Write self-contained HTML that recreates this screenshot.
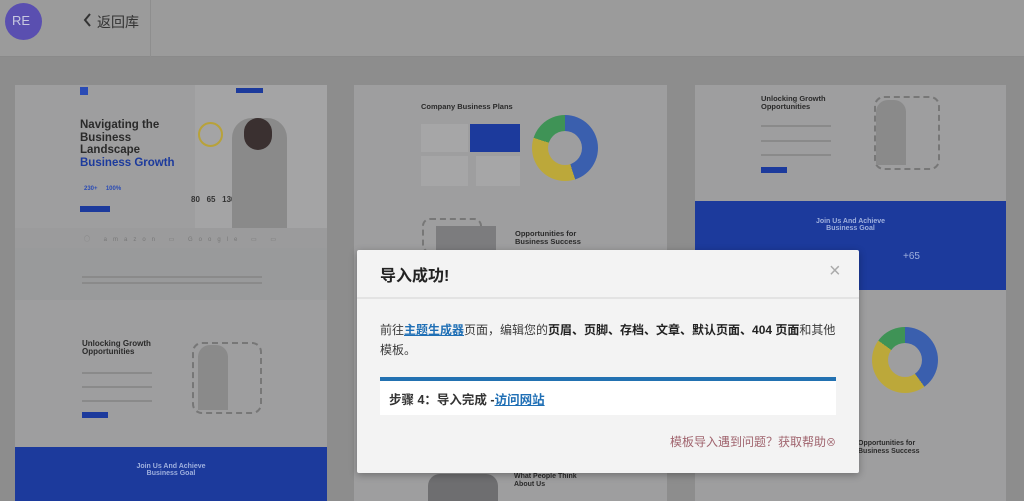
<!DOCTYPE html>
<html><head><meta charset="utf-8">
<style>
*{margin:0;padding:0;box-sizing:border-box}
body{width:1024px;height:501px;overflow:hidden;background:#8d8d8d;font-family:"Liberation Sans","Noto Sans CJK SC",sans-serif;position:relative}
.abs{position:absolute}
.hdr{left:0;top:0;width:1024px;height:57px;background:#9b9b9b;border-bottom:1px solid #8a8a8a}
.card{background:#9e9e9f}
.t{font-family:"Liberation Sans",sans-serif;font-weight:bold;color:#2a2a2a}
.ln{background:#8a8a8a;height:2px}
.blue{background:#1c3a9c}
.ring{border-radius:50%}
</style></head><body>
<div class="abs hdr"></div>
<div class="abs" style="left:150px;top:0;width:1px;height:57px;background:#8e8e8e"></div>
<div class="abs ring" style="left:5px;top:3px;width:37px;height:37px;background:#5a4fb0"></div>
<div class="abs" style="left:12px;top:13px;color:#c8c8e0;font:13px 'Liberation Sans',sans-serif">RE</div>
<svg class="abs" style="left:83px;top:13px" width="10" height="14"><path d="M7 1L2 7L7 13" stroke="#333" stroke-width="2" fill="none"/></svg>
<div class="abs" style="left:97px;top:12px;font-size:14px;color:#333">返回库</div>

<!-- left card -->
<div class="abs card" style="left:15px;top:85px;width:312px;height:416px"></div>
<div class="abs" style="left:195px;top:85px;width:132px;height:143px;background:#a4a4a5"></div>
<div class="abs" style="left:80px;top:87px;width:8px;height:8px;background:#2a4bb5"></div>
<div class="abs blue" style="left:236px;top:88px;width:27px;height:5px"></div>
<div class="abs t" style="left:80px;top:119px;font-size:11.5px;line-height:12.5px">Navigating the<br>Business<br>Landscape<br><span style="color:#1c3a9c">Business Growth</span></div>
<div class="abs" style="left:84px;top:186px;color:#2a4bb5;font:bold 6px sans-serif">230+ &nbsp; &nbsp; 100%</div>
<div class="abs blue" style="left:80px;top:206px;width:30px;height:6px"></div>
<div class="abs ring" style="left:198px;top:122px;width:25px;height:25px;border:2px solid #b8a23a"></div>
<div class="abs" style="left:191px;top:195px;font:bold 8px sans-serif;color:#333">80 &nbsp; 65 &nbsp; 130</div>
<div class="abs" style="left:232px;top:118px;width:55px;height:110px;background:#8a8a8a;border-radius:20px 20px 0 0"></div>
<div class="abs" style="left:244px;top:118px;width:28px;height:32px;background:#3a3030;border-radius:14px"></div>
<div class="abs" style="left:15px;top:228px;width:312px;height:20px;background:#9b9b9c"></div>
<div class="abs" style="left:84px;top:234px;font-size:6px;color:#777;letter-spacing:6px">◯ amazon ▭ Google ▭ ▭</div>
<div class="abs" style="left:15px;top:248px;width:312px;height:52px;background:#999a9b"></div>
<div class="abs ln" style="left:82px;top:276px;width:180px"></div>
<div class="abs ln" style="left:82px;top:282px;width:180px"></div>
<div class="abs t" style="left:82px;top:340px;font-size:8px;line-height:8px">Unlocking Growth<br>Opportunities</div>
<div class="abs ln" style="left:82px;top:372px;width:70px"></div>
<div class="abs ln" style="left:82px;top:386px;width:70px"></div>
<div class="abs ln" style="left:82px;top:400px;width:70px"></div>
<div class="abs blue" style="left:82px;top:412px;width:26px;height:6px"></div>
<div class="abs" style="left:192px;top:342px;width:70px;height:72px;border:2px dashed #777;border-radius:10px"></div>
<div class="abs" style="left:198px;top:345px;width:30px;height:65px;background:#8a8a8a;border-radius:12px 12px 0 0"></div>
<div class="abs blue" style="left:15px;top:447px;width:312px;height:54px"></div>
<div class="abs" style="left:15px;top:463px;width:312px;text-align:center;font:bold 7px 'Liberation Sans',sans-serif;color:#9fb0de">Join Us And Achieve<br>Business Goal</div>

<!-- middle card -->
<div class="abs card" style="left:354px;top:85px;width:313px;height:416px"></div>
<div class="abs t" style="left:421px;top:102px;font-size:7.5px">Company Business Plans</div>
<div class="abs" style="left:421px;top:124px;width:47px;height:28px;background:#a6a6a7"></div>
<div class="abs blue" style="left:470px;top:124px;width:50px;height:28px"></div>
<div class="abs" style="left:421px;top:156px;width:47px;height:30px;background:#a6a6a7"></div>
<div class="abs" style="left:476px;top:156px;width:44px;height:30px;background:#a6a6a7"></div>
<div class="abs ring" style="left:532px;top:115px;width:66px;height:66px;background:conic-gradient(#3a5fae 0 45%,#bca83a 45% 80%,#3f9356 80%)"></div>
<div class="abs ring" style="left:548px;top:131px;width:34px;height:34px;background:#9e9e9f"></div>
<div class="abs" style="left:422px;top:218px;width:60px;height:35px;border:2px dashed #777;border-radius:8px"></div>
<div class="abs" style="left:436px;top:226px;width:60px;height:30px;background:#7c7c7e"></div>
<div class="abs t" style="left:515px;top:230px;font-size:7.5px;line-height:8px">Opportunities for<br>Business Success</div>
<div class="abs t" style="left:514px;top:473px;font-size:7px;line-height:7.5px">What People Think<br>About Us</div>
<div class="abs" style="left:428px;top:474px;width:70px;height:27px;background:#6e6e70;border-radius:12px 12px 0 0"></div>

<!-- right card -->
<div class="abs card" style="left:695px;top:85px;width:311px;height:416px"></div>
<div class="abs t" style="left:761px;top:95px;font-size:7.5px;line-height:7.5px">Unlocking Growth<br>Opportunities</div>
<div class="abs ln" style="left:761px;top:125px;width:70px"></div>
<div class="abs ln" style="left:761px;top:140px;width:70px"></div>
<div class="abs ln" style="left:761px;top:154px;width:70px"></div>
<div class="abs blue" style="left:761px;top:167px;width:26px;height:6px"></div>
<div class="abs" style="left:874px;top:96px;width:66px;height:74px;border:2px dashed #777;border-radius:10px"></div>
<div class="abs" style="left:876px;top:100px;width:30px;height:65px;background:#8a8a8a;border-radius:12px 12px 0 0"></div>
<div class="abs blue" style="left:695px;top:201px;width:311px;height:89px"></div>
<div class="abs" style="left:695px;top:218px;width:311px;text-align:center;font:bold 7px 'Liberation Sans',sans-serif;color:#9fb0de">Join Us And Achieve<br>Business Goal</div>
<div class="abs" style="left:903px;top:251px;font-size:10px;color:#9fb0de">+65</div>
<div class="abs ring" style="left:872px;top:327px;width:66px;height:66px;background:conic-gradient(#3a5fae 0 40%,#bca83a 40% 85%,#3f9356 85%)"></div>
<div class="abs ring" style="left:888px;top:343px;width:34px;height:34px;background:#9e9e9f"></div>
<div class="abs t" style="left:858px;top:440px;font-size:7px;line-height:8px">Opportunities for<br>Business Success</div>

<!-- modal -->
<div class="abs" style="left:357px;top:250px;width:502px;height:223px;background:#f3f3f3;border-radius:2px;box-shadow:0 2px 8px rgba(0,0,0,.3)"></div>
<div class="abs" style="left:357px;top:297px;width:502px;height:2px;background:#e3e3e3"></div>
<div class="abs" style="left:380px;top:262px;font-size:16px;font-weight:bold;color:#222">导入成功!</div>
<div class="abs" style="left:829px;top:260px;font-size:20px;color:#aaa">×</div>
<div class="abs" style="left:380px;top:320px;white-space:nowrap;font-size:12px;line-height:20px;color:#3c3c3c">前往<a style="color:#1f6fb5;font-weight:bold;text-decoration:underline">主题生成器</a>页面，编辑您的<b style="color:#222">页眉、页脚、存档、文章、默认页面、404 页面</b>和其他<br>模板。</div>
<div class="abs" style="left:380px;top:377px;width:456px;height:4px;background:#2271b1"></div>
<div class="abs" style="left:380px;top:381px;width:456px;height:34px;background:#fff"></div>
<div class="abs" style="left:389px;top:389px;font-size:12.5px;font-weight:bold;color:#333">步骤 4：导入完成 -<a style="color:#1f6fb5;text-decoration:underline">访问网站</a></div>
<div class="abs" style="left:600px;top:433px;width:236px;text-align:right;font-size:12px;color:#a0646e">模板导入遇到问题？获取帮助<span style="font-size:10px">⊗</span></div>
</body></html>
